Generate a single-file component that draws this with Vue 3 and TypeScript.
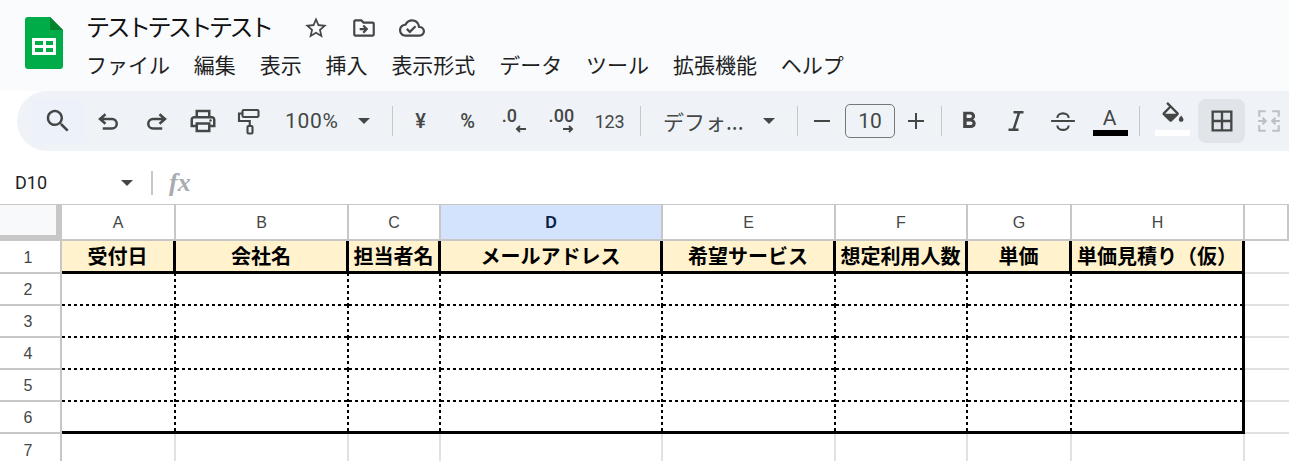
<script setup lang="ts">
const menus = ['ファイル', '編集', '表示', '挿入', '表示形式', 'データ', 'ツール', '拡張機能', 'ヘルプ']
const cols = ['A', 'B', 'C', 'D', 'E', 'F', 'G', 'H', '']
const heads = ['受付日', '会社名', '担当者名', 'メールアドレス', '希望サービス', '想定利用人数', '単価', '単価見積り（仮）']
const rows = [2, 3, 4, 5, 6]
</script>

<template>
  <div class="page">
    <header class="top">
      <svg class="logo" viewBox="0 0 38 52" width="38" height="52">
        <path d="M3 0H25L38 13V49a3 3 0 0 1-3 3H3a3 3 0 0 1-3-3V3a3 3 0 0 1 3-3z" fill="#00ac47" />
        <path d="M25 0L38 13H25z" fill="#00832d" />
        <path d="M7 21H31V38H7zM10 24V28H18V24zM21 24V28H28V24zM10 31V35H18V31zM21 31V35H28V31z" fill="#fff" fill-rule="evenodd" />
      </svg>
      <div class="titles">
        <div class="title-row">
          <span class="title">テストテストテスト</span>
          <svg class="ti" viewBox="0 0 24 24"><path d="M22 9.24l-7.19-.62L12 2 9.19 8.63 2 9.24l5.46 4.73L5.82 21 12 17.27 18.18 21l-1.63-7.03L22 9.24zM12 15.4l-3.76 2.27 1-4.28-3.32-2.88 4.38-.38L12 6.1l1.71 4.04 4.38.38-3.32 2.88 1 4.28L12 15.4z" /></svg>
          <svg class="ti" viewBox="0 0 24 24"><path d="M20 6h-8l-2-2H4c-1.1 0-1.99.9-1.99 2L2 18c0 1.1.9 2 2 2h16c1.1 0 2-.9 2-2V8c0-1.1-.9-2-2-2zm0 12H4V6h5.17l2 2H20v10zm-8.01-9l-1.41 1.41L12.16 12H8v2h4.16l-1.59 1.59L11.99 17 16 13.01 11.99 9z" /></svg>
          <svg class="ti" viewBox="0 0 24 24"><path d="M19.35 10.04C18.67 6.59 15.64 4 12 4 9.11 4 6.6 5.64 5.35 8.04 2.34 8.36 0 10.91 0 14c0 3.31 2.69 6 6 6h13c2.76 0 5-2.24 5-5 0-2.64-2.05-4.78-4.65-4.96zM19 18H6c-2.21 0-4-1.79-4-4 0-2.05 1.53-3.76 3.56-3.97l1.07-.11.5-.95C8.08 7.14 9.94 6 12 6c2.62 0 4.88 1.86 5.39 4.43l.3 1.5 1.53.11c1.56.1 2.78 1.41 2.78 2.96 0 1.65-1.35 3-3 3zm-9-3.82l-2.09-2.09L6.5 13.5 10 17l6.01-6.01-1.41-1.41z" /></svg>
        </div>
        <nav class="menu"><span v-for="m in menus" :key="m">{{ m }}</span></nav>
      </div>
    </header>

    <div class="toolbar">
      <div class="tool search"><svg viewBox="0 0 24 24"><path d="M15.5 14h-.79l-.28-.27C15.41 12.59 16 11.11 16 9.5 16 5.91 13.09 3 9.5 3S3 5.91 3 9.5 5.91 16 9.5 16c1.61 0 3.09-.59 4.23-1.57l.27.28v.79l5 4.99L20.49 19l-4.99-5zm-6 0C7.01 14 5 11.99 5 9.5S7.01 5 9.5 5 14 7.01 14 9.5 11.99 14 9.5 14z" /></svg></div>
      <div class="tool"><svg viewBox="0 0 24 24" class="st heavy"><path d="M9.2 6.6L4.8 10.4l4.4 3.8M4.8 10.4H14.4a3.8 3.8 0 0 1 0 7.6H7" /></svg></div>
      <div class="tool"><svg viewBox="0 0 24 24" class="st heavy"><path d="M14.8 6.6l4.4 3.8-4.4 3.8M19.2 10.4H9.6a3.8 3.8 0 0 0 0 7.6h7.4" /></svg></div>
      <div class="tool"><svg viewBox="0 0 24 24"><path d="M19 8h-1V3H6v5H5c-1.66 0-3 1.34-3 3v6h4v4h12v-4h4v-6c0-1.66-1.34-3-3-3zM8 5h8v3H8V5zm8 12v2H8v-4h8v2zm2-2v-2H6v2H4v-4c0-.55.45-1 1-1h14c.55 0 1 .45 1 1v4h-2z" /><circle cx="18" cy="11.5" r="1" /></svg></div>
      <div class="tool"><svg viewBox="0 0 24 24" class="st"><rect x="6" y="3.2" width="12.8" height="5.6" rx="1" /><path d="M6 6H3.2v6h8.6v4" /><rect x="10" y="16" width="4" height="6" rx=".8" /></svg></div>
      <div class="zoom"><span>100%</span><i class="caret"></i></div>
      <i class="sep s1"></i>
      <div class="tool txt">¥</div>
      <div class="tool txt">%</div>
      <div class="tool dec one">
        <span>.0</span>
        <svg class="arrow" viewBox="0 0 12 8"><path d="M11 4H2M5 1L2 4l3 3" /></svg>
      </div>
      <div class="tool dec">
        <span>.00</span>
        <svg class="arrow" viewBox="0 0 12 8"><path d="M1 4h9M7 1l3 3-3 3" /></svg>
      </div>
      <div class="tool txt wide">123</div>
      <i class="sep s2"></i>
      <div class="font"><span>デフォ...</span><i class="caret"></i></div>
      <i class="sep s3"></i>
      <div class="tool pm"><svg viewBox="0 0 24 24"><path d="M4 11h16v2H4z" /></svg></div>
      <div class="size">10</div>
      <div class="tool pm plus"><svg viewBox="0 0 24 24"><path d="M11 4h2v7h7v2h-7v7h-2v-7H4v-2h7z" /></svg></div>
      <i class="sep s4"></i>
      <div class="tool"><svg viewBox="0 0 24 24" class="bold"><path d="M15.6 10.79c.97-.67 1.65-1.77 1.65-2.79 0-2.26-1.75-4-4-4H7v14h7.04c2.09 0 3.71-1.7 3.71-3.79 0-1.52-.86-2.82-2.15-3.42zM10 6.5h3c.83 0 1.5.67 1.5 1.5s-.67 1.5-1.5 1.5h-3v-3zm3.5 9H10v-3h3.5c.83 0 1.5.67 1.5 1.5s-.67 1.5-1.5 1.5z" /></svg></div>
      <div class="tool"><svg viewBox="0 0 24 24"><path d="M10 4v2h3.2L9.3 18H6v2h8v-2h-2.6l3.9-12H18V4z" /></svg></div>
      <div class="tool"><svg viewBox="0 0 24 24" class="st"><path d="M2.5 12h19M7.5 9.5a4.5 3.6 0 0 1 9 0M7.5 15.5a4.5 3.6 0 0 0 9 0" /></svg></div>
      <div class="tool color"><span class="a">A</span><i class="bar black"></i></div>
      <i class="sep s5"></i>
      <div class="tool color"><svg viewBox="0 0 24 24" class="fill"><path d="M16.56 8.94L7.62 0 6.21 1.41l2.38 2.38-5.15 5.15c-.59.59-.59 1.54 0 2.12l5.5 5.5c.29.29.68.44 1.06.44s.77-.15 1.06-.44l5.5-5.5c.59-.58.59-1.53 0-2.12zM5.21 10L10 5.21 14.79 10H5.21zM19 11.5s-2 2.17-2 3.5c0 1.1.9 2 2 2s2-.9 2-2c0-1.33-2-3.5-2-3.5z" /></svg><i class="bar white"></i></div>
      <div class="tool active"><svg viewBox="0 0 24 24" class="borders"><path d="M3 3v18h18V3H3zm8 16H5v-6h6v6zm0-8H5V5h6v6zm8 8h-6v-6h6v6zm0-8h-6V5h6v6z" /></svg></div>
      <div class="tool"><svg viewBox="0 0 24 24" class="merge"><path d="M3 8V3h6M15 3h6v5M21 16v5h-6M9 21H3v-5M2 12h6M6 9l3 3-3 3M22 12h-6M18 9l-3 3 3 3" /></svg></div>
    </div>

    <div class="formula">
      <span class="ref">D10</span><i class="caret"></i><i class="fsep"></i><span class="fx">fx</span>
    </div>

    <div class="grid">
      <div class="corner"></div>
      <div v-for="c in cols" :key="'h' + c" class="colh" :class="{ sel: c === 'D' }">{{ c }}</div>

      <div class="rowh">1</div>
      <div v-for="(h, i) in heads" :key="h" class="cell head" :class="{ last: i === 7 }">{{ h }}</div>
      <div class="cell rest edge"></div>

      <template v-for="r in rows" :key="r">
        <div class="rowh">{{ r }}</div>
        <div v-for="(h, i) in heads" :key="h" class="cell data" :class="{ last: i === 7, lastrow: r === 6 }"></div>
        <div class="cell rest edge"></div>
      </template>

      <div class="rowh nob">7</div>
      <div v-for="c in cols" :key="'z' + c" class="cell rest nob" :class="{ edge: c === '' }"></div>
    </div>
  </div>
</template>

<style>
html, body { margin: 0; background: #fff; overflow: hidden; }
</style>

<style scoped>
.page {
  width: 1289px;
  height: 461px;
  overflow: hidden;
  font-family: "Noto Sans CJK JP", "Liberation Sans", sans-serif;
  color: #1f1f1f;
  background: #fff;
}
svg { display: block; fill: #444746; }
.top {
  background: #f9fbfd;
  height: 91px;
  display: flex;
  padding: 17px 0 0 25px;
  box-sizing: border-box;
}
.logo { flex: none; }
.titles { margin-left: 24px; margin-top: -7px; }
.title-row { display: flex; align-items: center; height: 32px; }
.title { font-size: 24px; letter-spacing: -3.5px; line-height: 32px; width: 216px; margin-left: -1px; margin-right: 1px; white-space: nowrap; color: #111; }
.ti { width: 26px; height: 26px; margin-right: 22px; margin-top: 4px; }
.menu { display: flex; gap: 23.85px; font-size: 21px; line-height: 30px; margin-top: 7px; margin-left: -1px; color: #1f1f1f; white-space: nowrap; }

.toolbar {
  height: 60px;
  margin-left: 17px;
  padding-left: 14px;
  background: #eff3f8;
  border-radius: 30px 0 0 30px;
  display: flex;
  align-items: center;
  overflow: hidden;
  color: #444746;
}
.tool {
  flex: none;
  width: 47px;
  height: 44px;
  display: flex;
  align-items: center;
  justify-content: center;
  position: relative;
  border-radius: 6px;
}
.tool svg { width: 30px; height: 30px; }
.tool svg.bold { width: 28px; height: 28px; }
.tool svg.borders { width: 28px; height: 28px; }
.search { width: 54px; background: #edf2fa; border-radius: 0; }
.st { fill: none !important; stroke: #444746; stroke-width: 1.7; }
.st.heavy { stroke-width: 2; }
.zoom { flex: none; width: 108px; display: flex; align-items: center; padding-left: 12px; box-sizing: border-box; font-size: 21px; font-family: Roboto, sans-serif; letter-spacing: .7px; }
.zoom .caret { margin-left: 19px; }
.caret { display: block; flex: none; width: 0; height: 0; border-left: 6px solid transparent; border-right: 6px solid transparent; border-top: 6px solid #444746; }
.sep { display: block; flex: none; width: 1px; height: 30px; background: #c7c7c7; }
.s1 { margin: 0 4px 0 11px; }
.s2 { margin: 0 22px 0 6px; }
.s3 { margin: 0 8px 0 12px; }
.s4 { margin: 0 3px 0 9px; }
.s5 { margin: 0 8px 0 6px; }
.txt { font-family: Roboto, sans-serif; font-size: 20px; font-weight: 500; }
.wide { width: 49px; font-weight: 400; letter-spacing: -.2px; font-size: 18px; }
.dec { font-family: Roboto, sans-serif; font-size: 18px; font-weight: 500; }
.dec span { margin-top: -11px; letter-spacing: .2px; }
.one span { margin-left: -10px; }
.tool .arrow { position: absolute; left: 50%; bottom: 10px; width: 12px; height: 8px; fill: none; stroke: #444746; stroke-width: 2; }
.font { flex: none; width: 122px; display: flex; align-items: center; font-size: 21px; white-space: nowrap; }
.font span { width: 100px; overflow: hidden; }
.pm { width: 32px; }
.tool.pm svg { width: 24px; height: 24px; }
.plus { margin-left: 5px; }
.size {
  flex: none;
  margin-left: 7px;
  width: 50px;
  height: 34px;
  box-sizing: border-box;
  border: 1px solid #747775;
  border-radius: 5px;
  text-align: center;
  line-height: 32px;
  font-family: Roboto, sans-serif;
  font-size: 21px;
}
.color { flex-direction: column; }
.a { font-family: Roboto, sans-serif; font-size: 21px; font-weight: 400; line-height: 22px; margin-top: -7px; }
.bar { display: block; width: 35px; height: 6px; position: absolute; left: 7px; bottom: 7px; }
.black { background: #000; }
.white { background: #fff; }
.tool svg.fill { width: 28px; height: 28px; margin-top: -10px; margin-left: 2px; }
.active { background: #e1e5ea; border-radius: 8px; margin-left: 3px; }
.tool svg.merge { width: 26px; height: 26px; fill: none; stroke: #bdc1c6; stroke-width: 2; }

.formula {
  margin-top: 12px;
  height: 42px;
  display: flex;
  align-items: center;
  padding: 0 0 2px 15px;
  box-sizing: border-box;
  background: #fff;
  border-bottom: 1px solid #c7c7c7;
}
.ref { width: 106px; font-family: Roboto, sans-serif; font-size: 18px; color: #1f1f1f; }
.fsep { display: block; width: 2px; height: 24px; background: #c7c7c7; margin: 0 16px 0 18px; }
.fx { font-family: "Liberation Serif", serif; font-style: italic; font-weight: 700; font-size: 26px; color: #a8abb0; }

.grid {
  display: grid;
  grid-template-columns: 62px 114px 173px 92px 222px 173px 132px 104px 173px 44px;
  grid-template-rows: 36px 33px repeat(5, 32px) 32px;
  font-family: "Liberation Sans", sans-serif;
}
.corner { background: #f8f9fa; border-right: 6px solid #c7c7c7; border-bottom: 6px solid #c7c7c7; }
.colh {
  display: flex;
  align-items: center;
  justify-content: center;
  padding-top: 2px;
  font-size: 16px;
  color: #444746;
  box-sizing: border-box;
  border-right: 2px solid #c7c7c7;
  border-bottom: 2px solid #c7c7c7;
}
.colh.sel { background: #d3e3fd; color: #0b1f4b; font-weight: 700; }
.colh:last-child { border-right: 0; }
.rowh {
  display: flex;
  align-items: center;
  justify-content: center;
  padding: 2px 4px 0 0;
  font-size: 16px;
  color: #444746;
  box-sizing: border-box;
  border-right: 2px solid #c7c7c7;
  border-bottom: 2px solid #c7c7c7;
}
.rowh.nob { border-bottom: 0; }
.cell { box-sizing: border-box; }
.head {
  background: #fff2cc;
  border-right: 3px solid #000;
  border-bottom: 3px solid #000;
  padding-bottom: 2px;
  font-family: "Noto Sans CJK JP", sans-serif;
  font-weight: 700;
  font-size: 20px;
  color: #000;
  display: flex;
  align-items: center;
  justify-content: center;
  white-space: nowrap;
}
.data {
  background:
    repeating-linear-gradient(90deg, #000 0 3px, transparent 3px 6px) left bottom / 100% 2px no-repeat,
    repeating-linear-gradient(0deg, #000 0 3px, transparent 3px 6px) right top / 2px 100% no-repeat;
}
.data.last { background: repeating-linear-gradient(90deg, #000 0 3px, transparent 3px 6px) left bottom / 100% 2px no-repeat; border-right: 3px solid #000; }
.data.lastrow { background: repeating-linear-gradient(0deg, #000 0 3px, transparent 3px 6px) right top / 2px 100% no-repeat; border-bottom: 3px solid #000; }
.data.last.lastrow { background: none; }
.rest { border-bottom: 2px solid #e1e1e1; border-right: 2px solid #e1e1e1; }
.rest.edge { border-right: 0; }
.rest.nob { border-bottom: 0; }
</style>
